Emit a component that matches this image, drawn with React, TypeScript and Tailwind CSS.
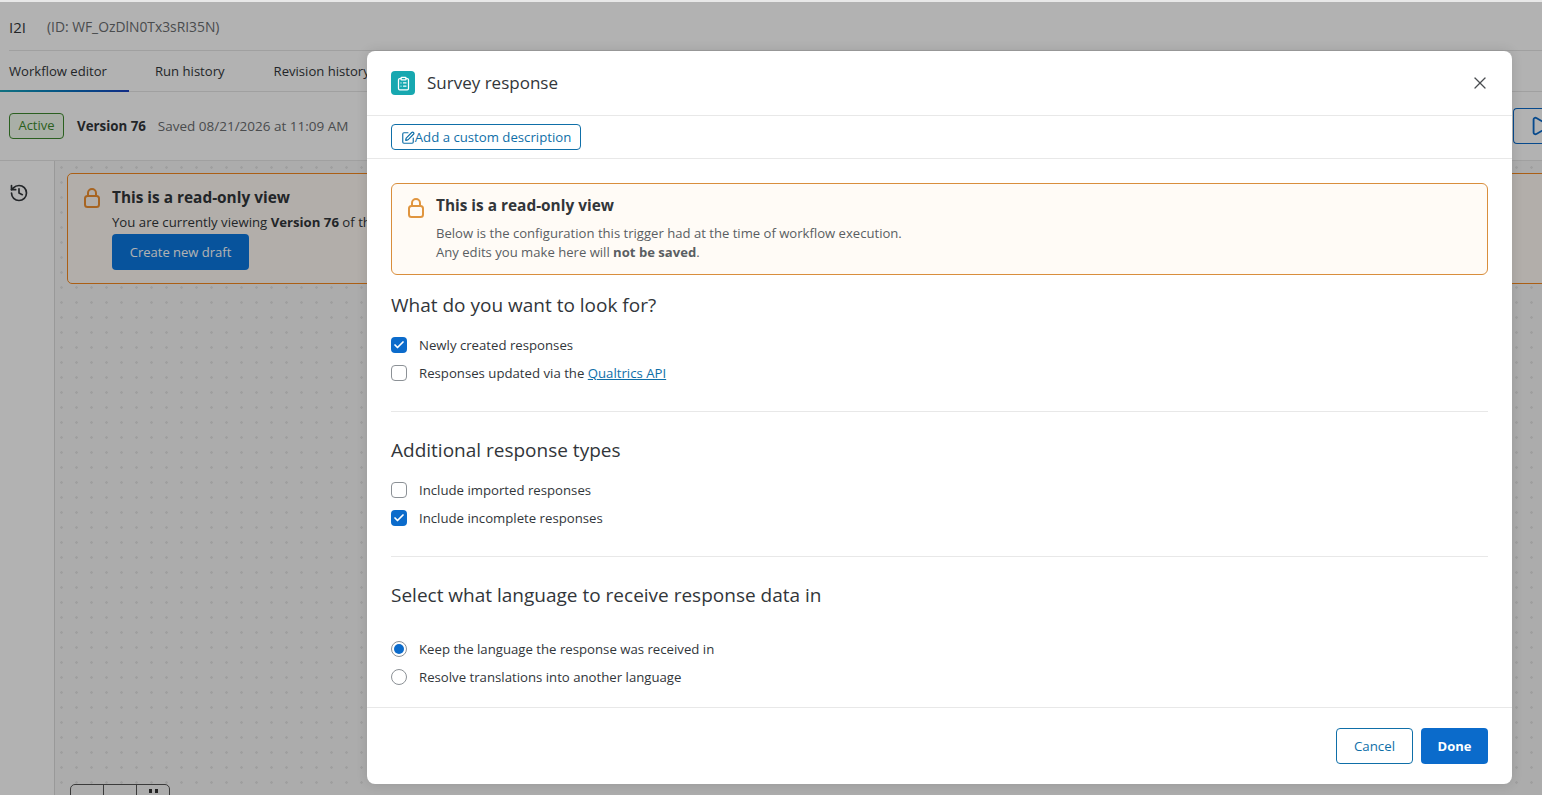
import { Check, ClipboardList, History, Play, SquarePen, X } from "lucide-react";
import type { ReactNode } from "react";

const font = "font-['Open_Sans','Noto_Sans',sans-serif]";

function LockIcon({ className }: { className: string }) {
  return (
    <svg viewBox="0 0 16 20" fill="none" stroke="currentColor" strokeWidth="2" className={className}>
      <rect x="1" y="8" width="14" height="11" rx="2.5" />
      <path d="M4 8V5a4 4 0 0 1 8 0V8" />
    </svg>
  );
}

function CheckRow({ checked, children }: { checked?: boolean; children: ReactNode }) {
  return (
    <div className="flex h-7 items-center gap-3 text-[13.2px] text-[#32363a]">
      <span
        className={
          checked
            ? "flex size-4 items-center justify-center rounded-[4px] bg-[#0b6bcb]"
            : "size-4 rounded-[4px] border border-[#8c9196] bg-white"
        }
      >
        {checked && <Check size={12} strokeWidth={3.5} className="text-white" />}
      </span>
      <span className="pt-[1px]">{children}</span>
    </div>
  );
}

function RadioRow({ checked, label }: { checked?: boolean; label: string }) {
  return (
    <div className="flex h-7 items-center gap-3 text-[13.2px] text-[#32363a]">
      <span className="flex size-4 items-center justify-center rounded-full border border-[#8c9196] bg-white">
        {checked && <span className="size-[10px] rounded-full bg-[#0b6bcb]" />}
      </span>
      <span className="pt-[1px]">{label}</span>
    </div>
  );
}

function Heading({ children }: { children: ReactNode }) {
  return <h2 className="text-[19px] leading-7 text-[#32363a]">{children}</h2>;
}

function Background() {
  return (
    <div className="flex h-full flex-col border-t-2 border-[#e8e8e8] bg-white">
      <div className="ml-[9px] flex h-[49px] items-center gap-[21px] border-b border-[#e5e5e5] pt-[2px]">
        <span className="text-[15px] text-[#32363a]">I2I</span>
        <span className="text-[13.85px] text-[#6a6d70]">(ID: WF_OzDlN0Tx3sRI35N)</span>
      </div>
      <div className="flex h-[41px] border-b border-[#e5e5e5] pt-[1px] text-[13.1px] text-[#32363a]">
        <div className="relative flex w-[129px] items-center pl-[9px]">
          Workflow editor
          <span className="absolute inset-x-0 bottom-[-1px] h-[2px] bg-gradient-to-r from-[#1aa3b8] to-[#1a3fc0]" />
        </div>
        <div className="ml-[26px] flex items-center">Run history</div>
        <div className="ml-[49px] flex items-center">Revision history</div>
      </div>
      <div className="flex h-[69px] items-center border-b border-[#e5e5e5] pl-[9px]">
        <span className="flex h-[26px] w-[55px] items-center justify-center rounded-[4px] border border-[#3e8a2e] bg-[#f2fbef] text-[13px] text-[#3e8a2e]">
          Active
        </span>
        <span className="ml-[13px] pt-[2px] text-[13.3px] font-bold text-[#32363a]">Version 76</span>
        <span className="ml-3 text-[13.5px] text-[#6a6d70]">Saved 08/21/2026 at 11:09 AM</span>
        <span className="ml-auto flex h-[36px] w-[29px] items-center rounded-l-[4px] border border-r-0 border-[#0b6bcb] pl-[15px]">
          <Play size={22} className="shrink-0 text-[#0b6bcb]" />
        </span>
      </div>
      <div className="flex flex-1">
        <div className="w-[55px] border-r border-[#dcdcdc] pl-[9px] pt-[22px]">
          <History size={20} className="text-[#32363a]" />
        </div>
        <div className="relative flex-1 bg-[#f7f7f7] bg-[radial-gradient(circle,#e4e4e4_1px,transparent_1.5px)] bg-[size:15px_15px] bg-[position:-1px_-1px] pl-3 pt-[12px]">
          <div className="mr-[-10px] flex h-[111px] gap-[12px] rounded-[5px] border border-[#f5891f] bg-[#fffaf4] pl-[16px] pt-[14px]">
            <LockIcon className="h-[20px] w-[16px] text-[#f09030]" />
            <div>
              <div className="text-[15.4px] font-bold leading-5 text-[#32363a]">This is a read-only view</div>
              <div className="mt-[5px] text-[13.2px] leading-[18px] text-[#32363a]">
                You are currently viewing <b>Version 76</b> of this workflow
              </div>
              <div className="mt-[3px] flex h-[36px] w-[137px] items-center justify-center rounded-[4px] bg-[#0b78e0] pt-[1px] text-[13px] text-white">
                Create new draft
              </div>
            </div>
          </div>
          <div className="absolute bottom-[-24px] left-[15px] flex h-[35px] w-[100px] rounded-[5px] border border-[#555] bg-[#f7f7f7]">
            <span className="w-[33px] border-r border-[#555]" />
            <span className="w-[33px] border-r border-[#555]" />
            <span className="flex flex-1 justify-center gap-[3px] pt-[4px]">
              <span className="h-[4px] w-[3px] bg-[#333]" />
              <span className="h-[4px] w-[3px] bg-[#333]" />
            </span>
          </div>
        </div>
      </div>
    </div>
  );
}

function Modal() {
  return (
    <div className="absolute left-[367px] top-[51px] flex h-[733px] w-[1145px] flex-col rounded-lg bg-white shadow-[0_0_12px_rgba(0,0,0,0.12)]">
      <div className="flex h-[65px] shrink-0 items-center border-b border-[#e8e8e8] pl-6 pr-6">
        <span className="flex size-6 items-center justify-center rounded-[4px] bg-[#17a8b0]">
          <ClipboardList size={15} className="text-white" />
        </span>
        <span className="ml-3 pb-[1px] text-[17px] text-[#32363a]">Survey response</span>
        <X size={20} strokeWidth={1.5} className="ml-auto mr-[-2px] text-[#4a4d50]" />
      </div>
      <div className="flex h-[43px] shrink-0 items-center border-b border-[#e8e8e8] pl-6">
        <span className="flex h-[26px] w-[190px] items-center justify-center rounded-[4px] border border-[#0f6fa8] pt-[1px] text-[13.2px] text-[#0f6fa8]">
          <SquarePen size={14} />
          Add a custom description
        </span>
      </div>
      <div className="flex-1 px-6 pt-6">
        <div className="flex h-[92px] gap-[12px] rounded-[6px] border border-[#d98e3c] bg-[#fffbf6] pl-[16px] pt-[12px]">
          <LockIcon className="mt-[2px] h-[20px] w-[16px] text-[#e0953f]" />
          <div>
            <div className="text-[15.4px] font-bold leading-5 text-[#32363a]">This is a read-only view</div>
            <div className="mt-[8px] text-[13.1px] leading-[19px] text-[#5a5e62]">
              Below is the configuration this trigger had at the time of workflow execution.
              <br />
              Any edits you make here will <b>not be saved</b>.
            </div>
          </div>
        </div>
        <div className="mt-4">
          <Heading>What do you want to look for?</Heading>
        </div>
        <div className="mt-[12px]">
          <CheckRow checked>Newly created responses</CheckRow>
          <CheckRow>
            Responses updated via the <span className="text-[#0f6fa8] underline">Qualtrics API</span>
          </CheckRow>
        </div>
        <div className="mt-[24px] border-t border-[#e8e8e8]" />
        <div className="mt-6">
          <Heading>Additional response types</Heading>
        </div>
        <div className="mt-[12px]">
          <CheckRow>Include imported responses</CheckRow>
          <CheckRow checked>Include incomplete responses</CheckRow>
        </div>
        <div className="mt-[24px] border-t border-[#e8e8e8]" />
        <div className="mt-6">
          <Heading>Select what language to receive response data in</Heading>
        </div>
        <div className="mt-[26px]">
          <RadioRow checked label="Keep the language the response was received in" />
          <RadioRow label="Resolve translations into another language" />
        </div>
      </div>
      <div className="flex h-[77px] shrink-0 items-center justify-end gap-2 border-t border-[#e8e8e8] pr-6">
        <span className="flex h-[36px] w-[77px] items-center justify-center rounded-[4px] border border-[#0f6fa8] pt-[1px] text-[13.3px] text-[#0f6fa8]">
          Cancel
        </span>
        <span className="flex h-[36px] w-[67px] items-center justify-center rounded-[4px] bg-[#0b6bcb] pt-[1px] text-[13px] font-bold text-white">
          Done
        </span>
      </div>
    </div>
  );
}

export default function App() {
  return (
    <div className={`relative h-[795px] w-[1542px] overflow-hidden ${font}`}>
      <Background />
      <div className="absolute inset-x-0 bottom-0 top-[2px] bg-black/30" />
      <Modal />
    </div>
  );
}
